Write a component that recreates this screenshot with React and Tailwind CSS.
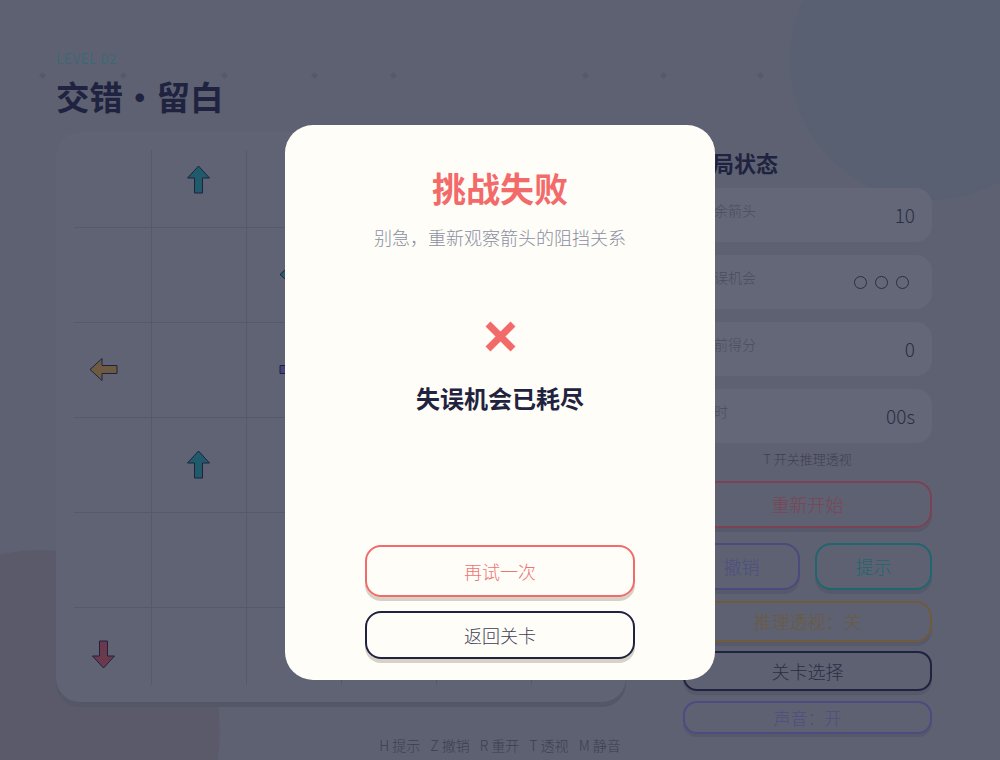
import React from "react";

const stats = [
  { label: "剩余箭头", value: "10" },
  { label: "失误机会", value: "lives" },
  { label: "当前得分", value: "0" },
  { label: "用时", value: "00s" },
];

const arrows = [
  { col: 1, row: 0, dir: "up", fill: "#1f5b6a" },
  { col: 2, row: 1, dir: "left", fill: "#2c5a66" },
  { col: 0, row: 2, dir: "left", fill: "#6e5a40" },
  { col: 2, row: 2, dir: "right", fill: "#45457a" },
  { col: 1, row: 3, dir: "up", fill: "#1f5b6a" },
  { col: 0, row: 5, dir: "down", fill: "#6a3a4c" },
];

const rot = { up: 0, right: 90, down: 180, left: 270 };

const hints = ["H 提示", "Z 撤销", "R 重开", "T 透视", "M 静音"];

function Board() {
  const cell = 95;
  const lines = [1, 2, 3, 4, 5];
  return (
    <div className="w-[570px] h-[570px] rounded-[24px] bg-[#606374] shadow-[0_5px_0_#545767]">
      <svg width="570" height="570" viewBox="0 0 570 570">
        {lines.map((i) => (
          <g key={i} stroke="#56596a" strokeWidth="1">
            <line x1={i * cell + 0.5} y1="18" x2={i * cell + 0.5} y2="553" />
            <line x1="18" y1={i * cell + 0.5} x2="552" y2={i * cell + 0.5} />
          </g>
        ))}
        {arrows.map((a, i) => (
          <g
            key={i}
            transform={`translate(${a.col * cell + 47.5} ${a.row * cell + 47.5}) rotate(${rot[a.dir]})`}
          >
            <path
              d="M0 -13.5 L11 -1.5 L4 -1.5 L4 13.5 L-4 13.5 L-4 -1.5 L-11 -1.5 Z"
              fill={a.fill}
              stroke="#1e2240"
              strokeWidth="1"
            />
          </g>
        ))}
      </svg>
    </div>
  );
}

function Lives() {
  return (
    <div className="flex gap-[8px] mt-[21px] mr-[6px]">
      {[0, 1, 2].map((i) => (
        <span key={i} className="w-[13px] h-[13px] rounded-full border-[1.5px] border-[#2a2d45]" />
      ))}
    </div>
  );
}

function Panel() {
  return (
    <div className="w-[249px] flex flex-col font-light">
      <h2 className="mt-[15px] pl-[7px] text-[22px] leading-[30px] font-bold text-[#1f2340]">本局状态</h2>
      <div className="mt-[11px] flex flex-col gap-[13px]">
        {stats.map((s) => (
          <div
            key={s.label}
            className="h-[54px] rounded-[16px] bg-[#646777] px-[17px] flex justify-between items-start"
          >
            <span className="mt-[13px] text-[14px] leading-[18px] text-[#4a4d60]">{s.label}</span>
            {s.value === "lives" ? (
              <Lives />
            ) : (
              <span className="mt-[14px] text-[19px] leading-[26px] text-[#2a2d45]">{s.value}</span>
            )}
          </div>
        ))}
      </div>
      <p className="mt-[6px] text-center text-[13px] leading-5 text-[#3c3f55]">T 开关推理透视</p>
      <button className="mt-[12px] h-[47px] rounded-[16px] border-2 border-[#7a4254] text-[18px] text-[#7b4556] shadow-[0_4px_0_#56596a]">
        重新开始
      </button>
      <div className="mt-[15px] flex gap-[15px]">
        <button className="flex-1 h-[47px] rounded-[16px] border-2 border-[#4a4a7c] text-[18px] text-[#4d4f80] shadow-[0_4px_0_#56596a]">
          撤销
        </button>
        <button className="flex-1 h-[47px] rounded-[16px] border-2 border-[#1f6670] text-[18px] text-[#1f6670] shadow-[0_4px_0_#56596a]">
          提示
        </button>
      </div>
      <button className="mt-[11px] h-[41px] rounded-[16px] border-2 border-[#6f5a3e] text-[18px] text-[#6b5a40] shadow-[0_4px_0_#56596a]">
        推理透视：关
      </button>
      <button className="mt-[9px] h-[40px] rounded-[14px] border-2 border-[#1f2340] text-[18px] text-[#2a2d45] shadow-[0_4px_0_#56596a]">
        关卡选择
      </button>
      <button className="mt-[10px] h-[33px] rounded-[14px] border-2 border-[#4b4c80] text-[17px] leading-none text-[#4d4f80] shadow-[0_3px_0_#56596a]">
        声音：开
      </button>
    </div>
  );
}

function Modal() {
  return (
    <div className="absolute inset-0 flex justify-center pt-[125px]">
      <div className="w-[430px] h-[555px] rounded-[28px] bg-[#fffdf7] flex flex-col items-center pt-[41px] pb-[21px]">
        <h1 className="text-[34px] leading-[44px] font-bold text-[#f26a6a]">挑战失败</h1>
        <p className="mt-[14px] text-[18px] leading-[26px] font-light text-[#8a8fa3]">别急，重新观察箭头的阻挡关系</p>
        <svg className="mt-[71px]" width="31" height="31" viewBox="0 0 31 31">
          <path d="M3 3 L28 28 M28 3 L3 28" stroke="#f26a6a" strokeWidth="7" />
        </svg>
        <p className="mt-[30px] text-[24px] leading-[32px] font-bold text-[#1f2340]">失误机会已耗尽</p>
        <div className="mt-auto flex flex-col gap-[14px] font-light">
          <button className="w-[270px] h-[52px] rounded-[16px] border-2 border-[#f26a6a] text-[18px] text-[#f07272] shadow-[0_4px_0_#d8d2c6]">
            再试一次
          </button>
          <button className="w-[270px] h-[48px] rounded-[16px] border-2 border-[#1f2340] text-[18px] text-[#3d4055] shadow-[0_4px_0_#d8d2c6]">
            返回关卡
          </button>
        </div>
      </div>
    </div>
  );
}

const dots = [42, 123, 224, 314, 393, 585, 663, 760];

export default function App() {
  return (
    <div className="relative w-[1000px] h-[760px] overflow-hidden bg-[#5e6171] font-['Noto_Sans_CJK_SC','Noto_Sans',sans-serif]">
      <div className="absolute left-[790px] top-[-80px] w-[280px] h-[280px] rounded-full bg-[#586072]" />
      <div className="absolute left-[-140px] top-[550px] w-[360px] h-[360px] rounded-full bg-[#5b5a6a]" />
      {dots.map((x) => (
        <div key={x} className="absolute top-[73px] w-[5px] h-[5px] rotate-45 bg-[#56596a]" style={{ left: x - 2 }} />
      ))}

      <div className="relative px-[56px] pt-[50px]">
        <div className="text-[14px] leading-4 font-light tracking-[0.04em] text-[#2e6c77]">LEVEL 02</div>
        <div className="mt-[10px] text-[33.5px] leading-[40px] font-bold text-[#1f2340]">交错・留白</div>
        <div className="mt-4 flex gap-[57px]">
          <Board />
          <Panel />
        </div>
      </div>

      <div className="absolute left-0 right-0 top-[735px] flex justify-center gap-[10px] text-[14px] leading-5 font-light text-[#3c3f55]">
        {hints.map((h) => (
          <span key={h}>{h}</span>
        ))}
      </div>

      <Modal />
    </div>
  );
}
